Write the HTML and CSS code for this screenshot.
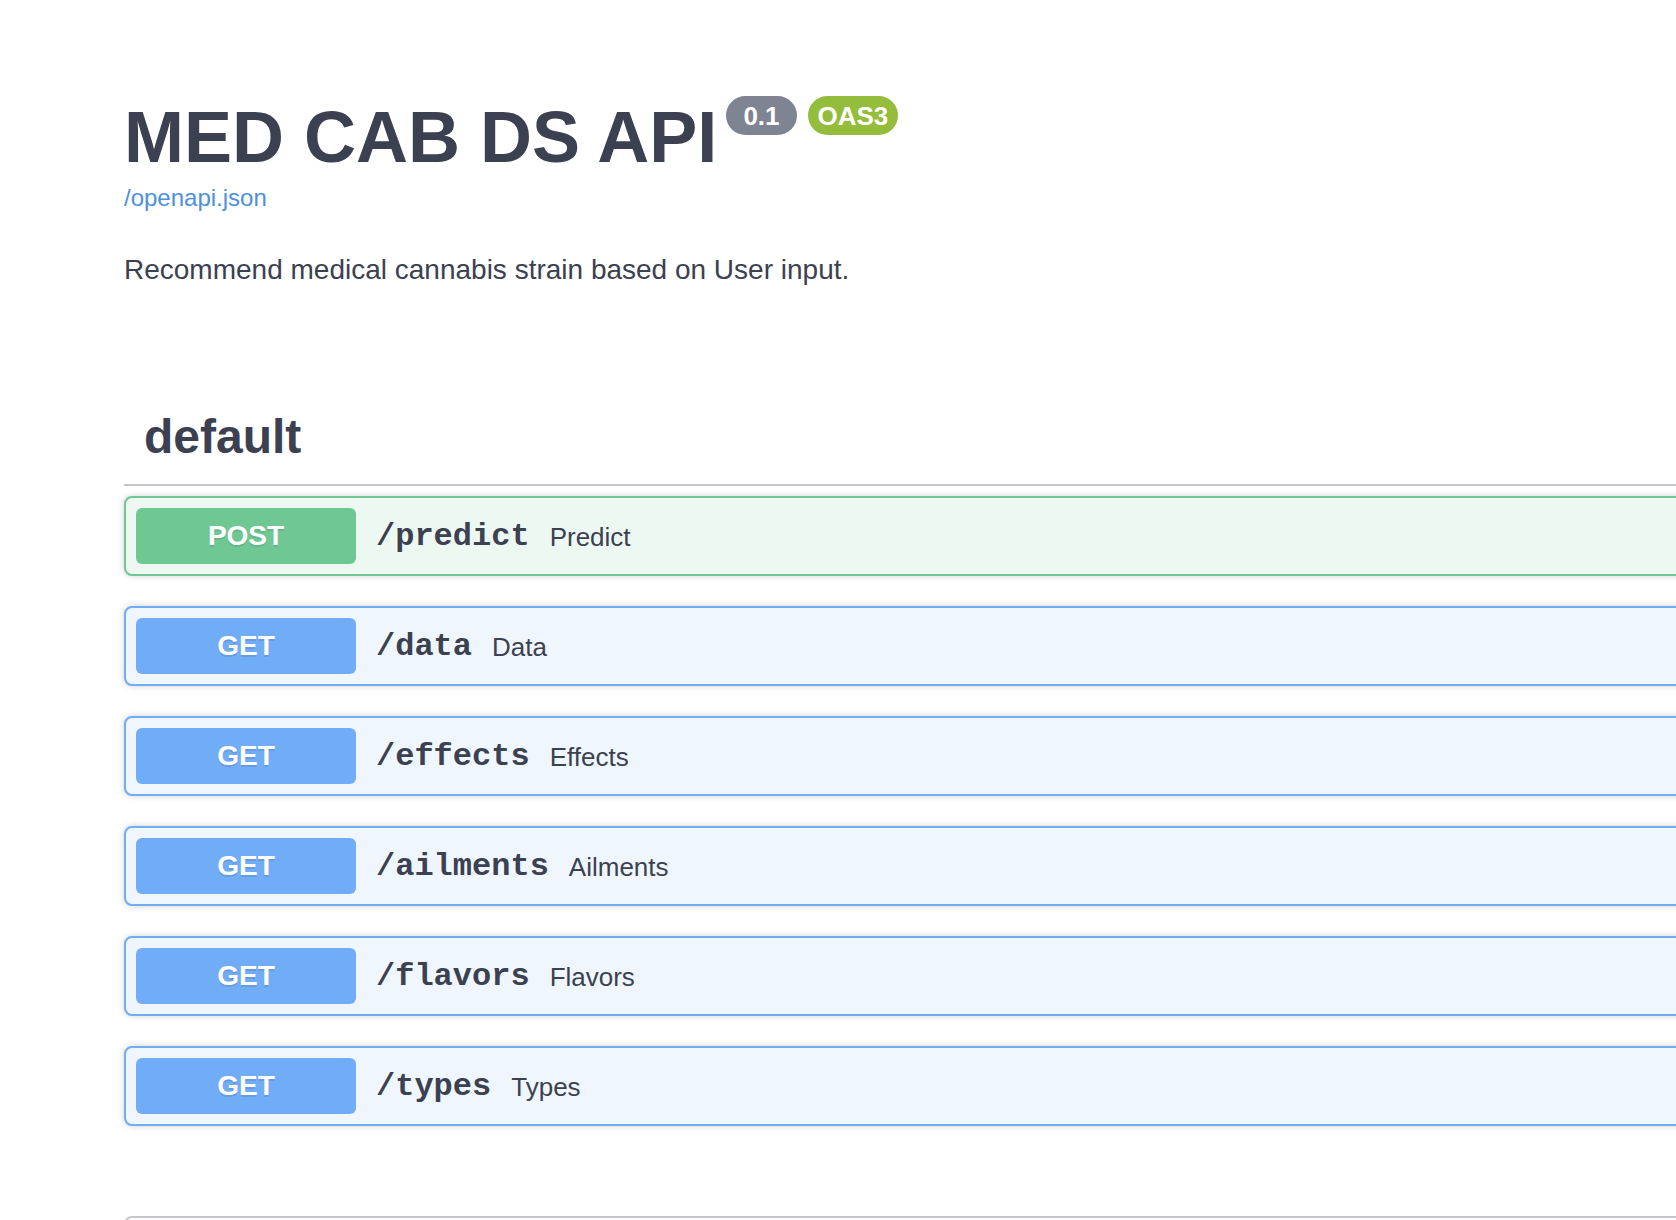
FILE: index.html
```html
<!DOCTYPE html>
<html lang="en">
<head>
<meta charset="utf-8">
<title>MED CAB DS API</title>
<link rel="stylesheet" href="styles.css">
</head>
<body>
<div class="wrapper">
  <section class="info">
    <div class="title-row">
      <h2 class="title">MED CAB DS API</h2>
      <small class="badge badge-version"><pre class="version">0.1</pre></small>
      <small class="badge badge-stamp"><pre class="version">OAS3</pre></small>
    </div>
    <a class="base-url" href="#">/openapi.json</a>
    <p class="description">Recommend medical cannabis strain based on User input.</p>
  </section>

  <section class="tag-section">
    <h3 class="opblock-tag"><span>default</span></h3>
    <div class="opblocks">
      <div class="opblock opblock-post">
        <span class="method">POST</span>
        <span class="path">/predict</span>
        <span class="summary">Predict</span>
      </div>
      <div class="opblock opblock-get">
        <span class="method">GET</span>
        <span class="path">/data</span>
        <span class="summary">Data</span>
      </div>
      <div class="opblock opblock-get">
        <span class="method">GET</span>
        <span class="path">/effects</span>
        <span class="summary">Effects</span>
      </div>
      <div class="opblock opblock-get">
        <span class="method">GET</span>
        <span class="path">/ailments</span>
        <span class="summary">Ailments</span>
      </div>
      <div class="opblock opblock-get">
        <span class="method">GET</span>
        <span class="path">/flavors</span>
        <span class="summary">Flavors</span>
      </div>
      <div class="opblock opblock-get">
        <span class="method">GET</span>
        <span class="path">/types</span>
        <span class="summary">Types</span>
      </div>
    </div>
  </section>

  <section class="models"></section>
</div>
</body>
</html>
```

FILE: styles.css
```css
html, body {
  margin: 0;
  padding: 0;
  height: 100%;
  background: #ffffff;
  overflow: hidden;
}

body {
  font-family: "Liberation Sans", Arial, sans-serif;
  color: #3b4151;
}

.wrapper {
  padding-left: 124px;
  margin-right: -60px;
}

.info {
  padding-top: 96px;
}

.title-row {
  display: flex;
  align-items: flex-start;
}

.title {
  margin: 0;
  font-size: 72px;
  line-height: 83px;
  font-weight: 700;
  color: #3b4151;
}

.badge {
  display: inline-flex;
  align-items: center;
  height: 39px;
  border-radius: 20px;
  margin-left: 10px;
  box-sizing: border-box;
}

.badge-version {
  background: #7e8492;
  padding: 0 17px;
  margin-left: 9px;
}

.badge-stamp {
  background: #93bd3a;
  padding: 0 10px;
  margin-left: 11px;
}

.badge .version {
  margin: 0;
  font-family: "Liberation Sans", Arial, sans-serif;
  font-size: 26px;
  font-weight: 700;
  color: #ffffff;
  line-height: 39px;
  padding-top: 2px;
}

.base-url {
  display: block;
  margin-top: 5px;
  font-size: 24px;
  line-height: 28px;
  color: #4d90e0;
  text-decoration: none;
}

.description {
  margin: 42px 0 0;
  font-size: 28px;
  line-height: 32px;
  color: #3b4151;
}

.tag-section {
  margin-top: 103px;
}

.opblock-tag {
  margin: 0 0 10px;
  padding: 20px 40px 20px 20px;
  font-size: 48px;
  line-height: 55px;
  font-weight: 700;
  color: #3b4151;
  border-bottom: 2px solid #c5c6cb;
}

.opblocks {
  display: flex;
  flex-direction: column;
  gap: 30px;
}

.opblock {
  display: flex;
  align-items: center;
  padding: 10px;
  border: 2px solid;
  border-radius: 8px;
  box-shadow: 0 0 6px rgba(0, 0, 0, 0.19);
}

.opblock-post {
  background: #eef8f3;
  border-color: #6fc894;
}

.opblock-get {
  background: #eff6fe;
  border-color: #71acf6;
}

.method {
  width: 220px;
  height: 56px;
  display: flex;
  align-items: center;
  justify-content: center;
  border-radius: 6px;
  font-size: 28px;
  font-weight: 700;
  color: #ffffff;
  text-shadow: 0 2px 0 rgba(0, 0, 0, 0.1);
}

.opblock-post .method {
  background: #6fc894;
}

.opblock-get .method {
  background: #71acf6;
}

.path {
  padding: 0 20px;
  font-family: "Liberation Mono", "Courier New", monospace;
  font-size: 32px;
  font-weight: 700;
  color: #3b4151;
}

.summary {
  font-size: 26px;
  color: #3b4151;
  padding-top: 2px;
}

.models {
  margin-top: 90px;
  height: 200px;
  border: 2px solid #c5c6cb;
  border-radius: 8px;
}
```
